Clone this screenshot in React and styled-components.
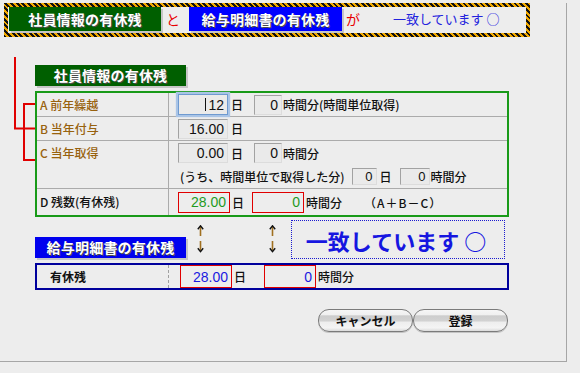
import React from 'react';
import styled, { createGlobalStyle } from 'styled-components';

const Global = createGlobalStyle`
  *, *::before, *::after { box-sizing: border-box; }
  html, body { margin: 0; padding: 0; background: #ededed; }
  body {
    font-family: "Noto Sans CJK JP", "Noto Sans", sans-serif;
    font-size: 12px;
    color: #111;
  }
`;

const Frame = styled.div`
  width: 567px;
  height: 359px;
  border-right: 1px solid #a6a6a6;
  border-bottom: 1px solid #a6a6a6;
  box-shadow: 0 4px 0 #cdcdcd;
  background: #ededed;
`;

const Banner = styled.div`
  margin: 3px 0 0 4px;
  width: 526px;
  height: 34px;
  padding: 4px;
  background: repeating-linear-gradient(45deg, #111 0 2px, #f2a900 2px 4px);
`;

const BannerInner = styled.div`
  height: 100%;
  background: #ededed;
  display: flex;
  align-items: flex-start;
  padding-left: 1px;
`;

const Tag = styled.div`
  width: ${p => p.$w}px;
  height: ${p => p.$h}px;
  background: ${p => p.$bg};
  color: #fff;
  font-weight: 700;
  font-size: 14px;
  line-height: ${p => p.$h}px;
  text-align: center;
  letter-spacing: 0.2px;
  text-shadow: 1px 1px 0 #4a4a4a;
  box-shadow: 2px 2px 0 #c6c6c6;
  flex: none;
`;

const Conj = styled.span`
  color: #e80000;
  font-size: 14px;
  line-height: 24px;
  margin-left: ${p => p.$ml}px;
  margin-right: ${p => p.$mr}px;
`;

const BannerMsg = styled.span`
  color: #2222dd;
  font-size: 13px;
  line-height: 24px;
  margin-left: 33px;
  white-space: pre;
`;

const Body = styled.div`
  display: flex;
  align-items: flex-start;
`;

const Bracket = styled.svg`
  display: block;
  flex: none;
  width: 35px;
  height: 130px;
`;

const Content = styled.div`
  width: 474px;
`;

const SectionTag = styled(Tag)`
  margin-top: 28px;
`;

const Table = styled.div`
  margin-top: ${p => p.$mt}px;
  border: 2px solid ${p => p.$border};
  display: flex;
  flex-direction: column;
`;

const Row = styled.div`
  display: flex;
  height: ${p => p.$h}px;
  border-bottom: ${p => (p.$last ? 'none' : '1px solid #ababab')};
  flex: none;
`;

const LabelCell = styled.div`
  width: 132px;
  flex: none;
  border-right: 1px ${p => (p.$dashed ? 'dashed #a0a0a0' : 'solid #ababab')};
  padding-left: ${p => p.$pl ?? 3}px;
  padding-top: ${p => p.$pt ?? 0}px;
  display: flex;
  align-items: ${p => (p.$top ? 'flex-start' : 'center')};
  color: ${p => p.$color};
  font-size: 12px;
  font-weight: ${p => (p.$bold ? 700 : 500)};
  line-height: 20px;
  white-space: pre;
`;

const ValueCell = styled.div`
  flex: 1;
  padding-left: ${p => p.$pl}px;
  display: flex;
  flex-direction: column;
`;

const Line = styled.div`
  display: flex;
  align-items: center;
  height: ${p => p.$h}px;
  padding-left: ${p => p.$pl ?? 0}px;
  white-space: pre;
`;

const NumBox = styled.div`
  width: ${p => p.$w}px;
  height: ${p => p.$h}px;
  flex: none;
  display: flex;
  align-items: center;
  justify-content: flex-end;
  padding-right: 3px;
  font-family: "Liberation Sans", Arial, sans-serif;
  font-size: ${p => p.$fs ?? 14}px;
  color: ${p => p.$color ?? '#111'};
  background: ${p => (p.$variant === 'red' ? 'transparent' : '#eaeaea')};
  border: 1px solid;
  border-color: ${p =>
    p.$variant === 'red'
      ? '#e00000'
      : p.$variant === 'focus'
      ? '#6f9ad0'
      : '#a2a2a2 #dcdcdc #dcdcdc #a2a2a2'};
  box-shadow: ${p => (p.$variant === 'focus' ? '0 0 1px 2px #a9c4e6' : 'none')};
`;

const Caret = styled.span`
  width: 1px;
  height: 13px;
  background: #111;
  margin-right: 2px;
`;

const Unit = styled.span`
  font-size: 12px;
  font-weight: 500;
  margin-left: ${p => p.$ml ?? 3}px;
  margin-right: ${p => p.$mr ?? 0}px;
  color: #111;
`;

const Note = styled.span`
  font-size: 12px;
  font-weight: 500;
  margin-left: ${p => p.$ml ?? 0}px;
  margin-right: ${p => p.$mr ?? 0}px;
  letter-spacing: ${p => p.$ls ?? 0}px;
`;

const MidRow = styled.div`
  display: flex;
  height: 39px;
  margin-top: 3px;
  align-items: flex-start;
`;

const BlueTag = styled(Tag)`
  align-self: flex-end;
  margin-bottom: 1px;
`;

const ArrowBox = styled.div`
  margin-left: ${p => p.$ml}px;
  margin-top: 5px;
  width: 7px;
  height: 28px;
  flex: none;
  display: flex;
`;

const MatchBox = styled.div`
  margin-left: 15px;
  width: 214px;
  height: 39px;
  border: 1px dotted #1a1ad0;
  display: flex;
  align-items: center;
  justify-content: center;
  color: #1616e0;
  font-size: 22px;
  font-weight: 700;
  white-space: pre;
  padding-right: 4px;
`;

const ButtonRow = styled.div`
  margin-top: 19px;
  display: flex;
  justify-content: flex-end;
  padding-right: 1px;
`;

const Button = styled.button`
  width: 95px;
  height: 23px;
  border: 1px solid #7b7b7b;
  border-radius: 11px;
  padding: 0;
  font-family: "Noto Sans CJK JP", sans-serif;
  font-size: 12px;
  font-weight: 700;
  color: #111;
  background: linear-gradient(
    #f6f6f6 0%,
    #f0f0f0 22%,
    #cdcdcd 28%,
    #d2d2d2 52%,
    #eeeeee 58%,
    #f4f4f4 85%,
    #dadada 100%
  );
  box-shadow: 0 1px 0 #c4c4c4;
`;

function Arrows({ ml }) {
  return (
    <ArrowBox $ml={ml}>
      <svg width="7" height="28" viewBox="0 0 7 28">
        <path d="M3.5 2 V11" stroke="#a07020" strokeWidth="1.6" />
        <path d="M0.8 4.2 L3.5 0.8 L6.2 4.2" stroke="#111" strokeWidth="1.4" fill="none" />
        <path d="M3.5 16 V25.5" stroke="#a07020" strokeWidth="1.6" />
        <path d="M0.8 23.2 L3.5 26.6 L6.2 23.2" stroke="#111" strokeWidth="1.4" fill="none" />
      </svg>
    </ArrowBox>
  );
}

export default function App() {
  return (
    <>
      <Global />
      <Frame>
        <Banner>
          <BannerInner>
            <Tag $w={152} $h={24} $bg="#005f00">社員情報の有休残</Tag>
            <Conj $ml={5} $mr={9}>と</Conj>
            <Tag $w={153} $h={24} $bg="#0000ff">給与明細書の有休残</Tag>
            <Conj $ml={4} $mr={0}>が</Conj>
            <BannerMsg>一致しています ○</BannerMsg>
          </BannerInner>
        </Banner>

        <Body>
          {/* connector lines from the rows A/B/C, drawn from y=37 */}
          <Bracket viewBox="0 0 35 130">
            <path d="M15 20 V91.5 H35" stroke="#e00000" strokeWidth="2" fill="none" />
            <path d="M35 67 H24 V123 H35" stroke="#e00000" strokeWidth="2" fill="none" />
          </Bracket>

          <Content>
            <SectionTag $w={151} $h={21} $bg="#005f00">社員情報の有休残</SectionTag>
            <Table $mt={5} $border="#189a18">
              <Row $h={24}>
                <LabelCell $color="#98620e">A 前年繰越</LabelCell>
                <ValueCell $pl={9}>
                  <Line $h={23}>
                    <NumBox $w={50} $h={21} $variant="focus"><Caret />12</NumBox>
                    <Unit $mr={11}>日</Unit>
                    <NumBox $w={28} $h={20}>0</NumBox>
                    <Unit $ml={1}>時間分(時間単位取得)</Unit>
                  </Line>
                </ValueCell>
              </Row>
              <Row $h={24}>
                <LabelCell $color="#98620e">B 当年付与</LabelCell>
                <ValueCell $pl={9}>
                  <Line $h={23}>
                    <NumBox $w={50} $h={20}>16.00</NumBox>
                    <Unit>日</Unit>
                  </Line>
                </ValueCell>
              </Row>
              <Row $h={48}>
                <LabelCell $color="#98620e" $top $pt={2}>C 当年取得</LabelCell>
                <ValueCell $pl={9}>
                  <Line $h={24}>
                    <NumBox $w={50} $h={20}>0.00</NumBox>
                    <Unit $mr={11}>日</Unit>
                    <NumBox $w={28} $h={20}>0</NumBox>
                    <Unit $ml={1}>時間分</Unit>
                  </Line>
                  <Line $h={22} $pl={2}>
                    <Note $mr={7}>(うち、時間単位で取得した分)</Note>
                    <NumBox $w={25} $h={17} $fs={13}>0</NumBox>
                    <Unit $mr={8}>日</Unit>
                    <NumBox $w={30} $h={17} $fs={13}>0</NumBox>
                    <Unit $ml={1}>時間分</Unit>
                  </Line>
                </ValueCell>
              </Row>
              <Row $h={26} $last>
                <LabelCell $color="#111">D 残数(有休残)</LabelCell>
                <ValueCell $pl={9}>
                  <Line $h={26}>
                    <NumBox $w={52} $h={21} $variant="red" $color="#1f9a1f">28.00</NumBox>
                    <Unit $ml={2} $mr={8}>日</Unit>
                    <NumBox $w={52} $h={21} $variant="red" $color="#1f9a1f">0</NumBox>
                    <Unit $ml={2}>時間分</Unit>
                    <Note $ml={22} $ls={1}>（A＋B－C）</Note>
                  </Line>
                </ValueCell>
              </Row>
            </Table>

            <MidRow>
              <BlueTag $w={151} $h={21} $bg="#0000ee">給与明細書の有休残</BlueTag>
              <Arrows ml={11} />
              <Arrows ml={65} />
              <MatchBox>一致しています ○</MatchBox>
            </MidRow>

            <Table $mt={4} $border="#00009c">
              <Row $h={23} $last>
                <LabelCell $color="#111" $pl={13} $dashed $bold>有休残</LabelCell>
                <ValueCell $pl={11}>
                  <Line $h={23}>
                    <NumBox $w={52} $h={23} $variant="red" $color="#1a1ae0">28.00</NumBox>
                    <Unit $ml={2} $mr={18}>日</Unit>
                    <NumBox $w={52} $h={23} $variant="red" $color="#1a1ae0">0</NumBox>
                    <Unit $ml={2}>時間分</Unit>
                  </Line>
                </ValueCell>
              </Row>
            </Table>

            <ButtonRow>
              <Button>キャンセル</Button>
              <Button>登録</Button>
            </ButtonRow>
          </Content>
        </Body>
      </Frame>
    </>
  );
}
